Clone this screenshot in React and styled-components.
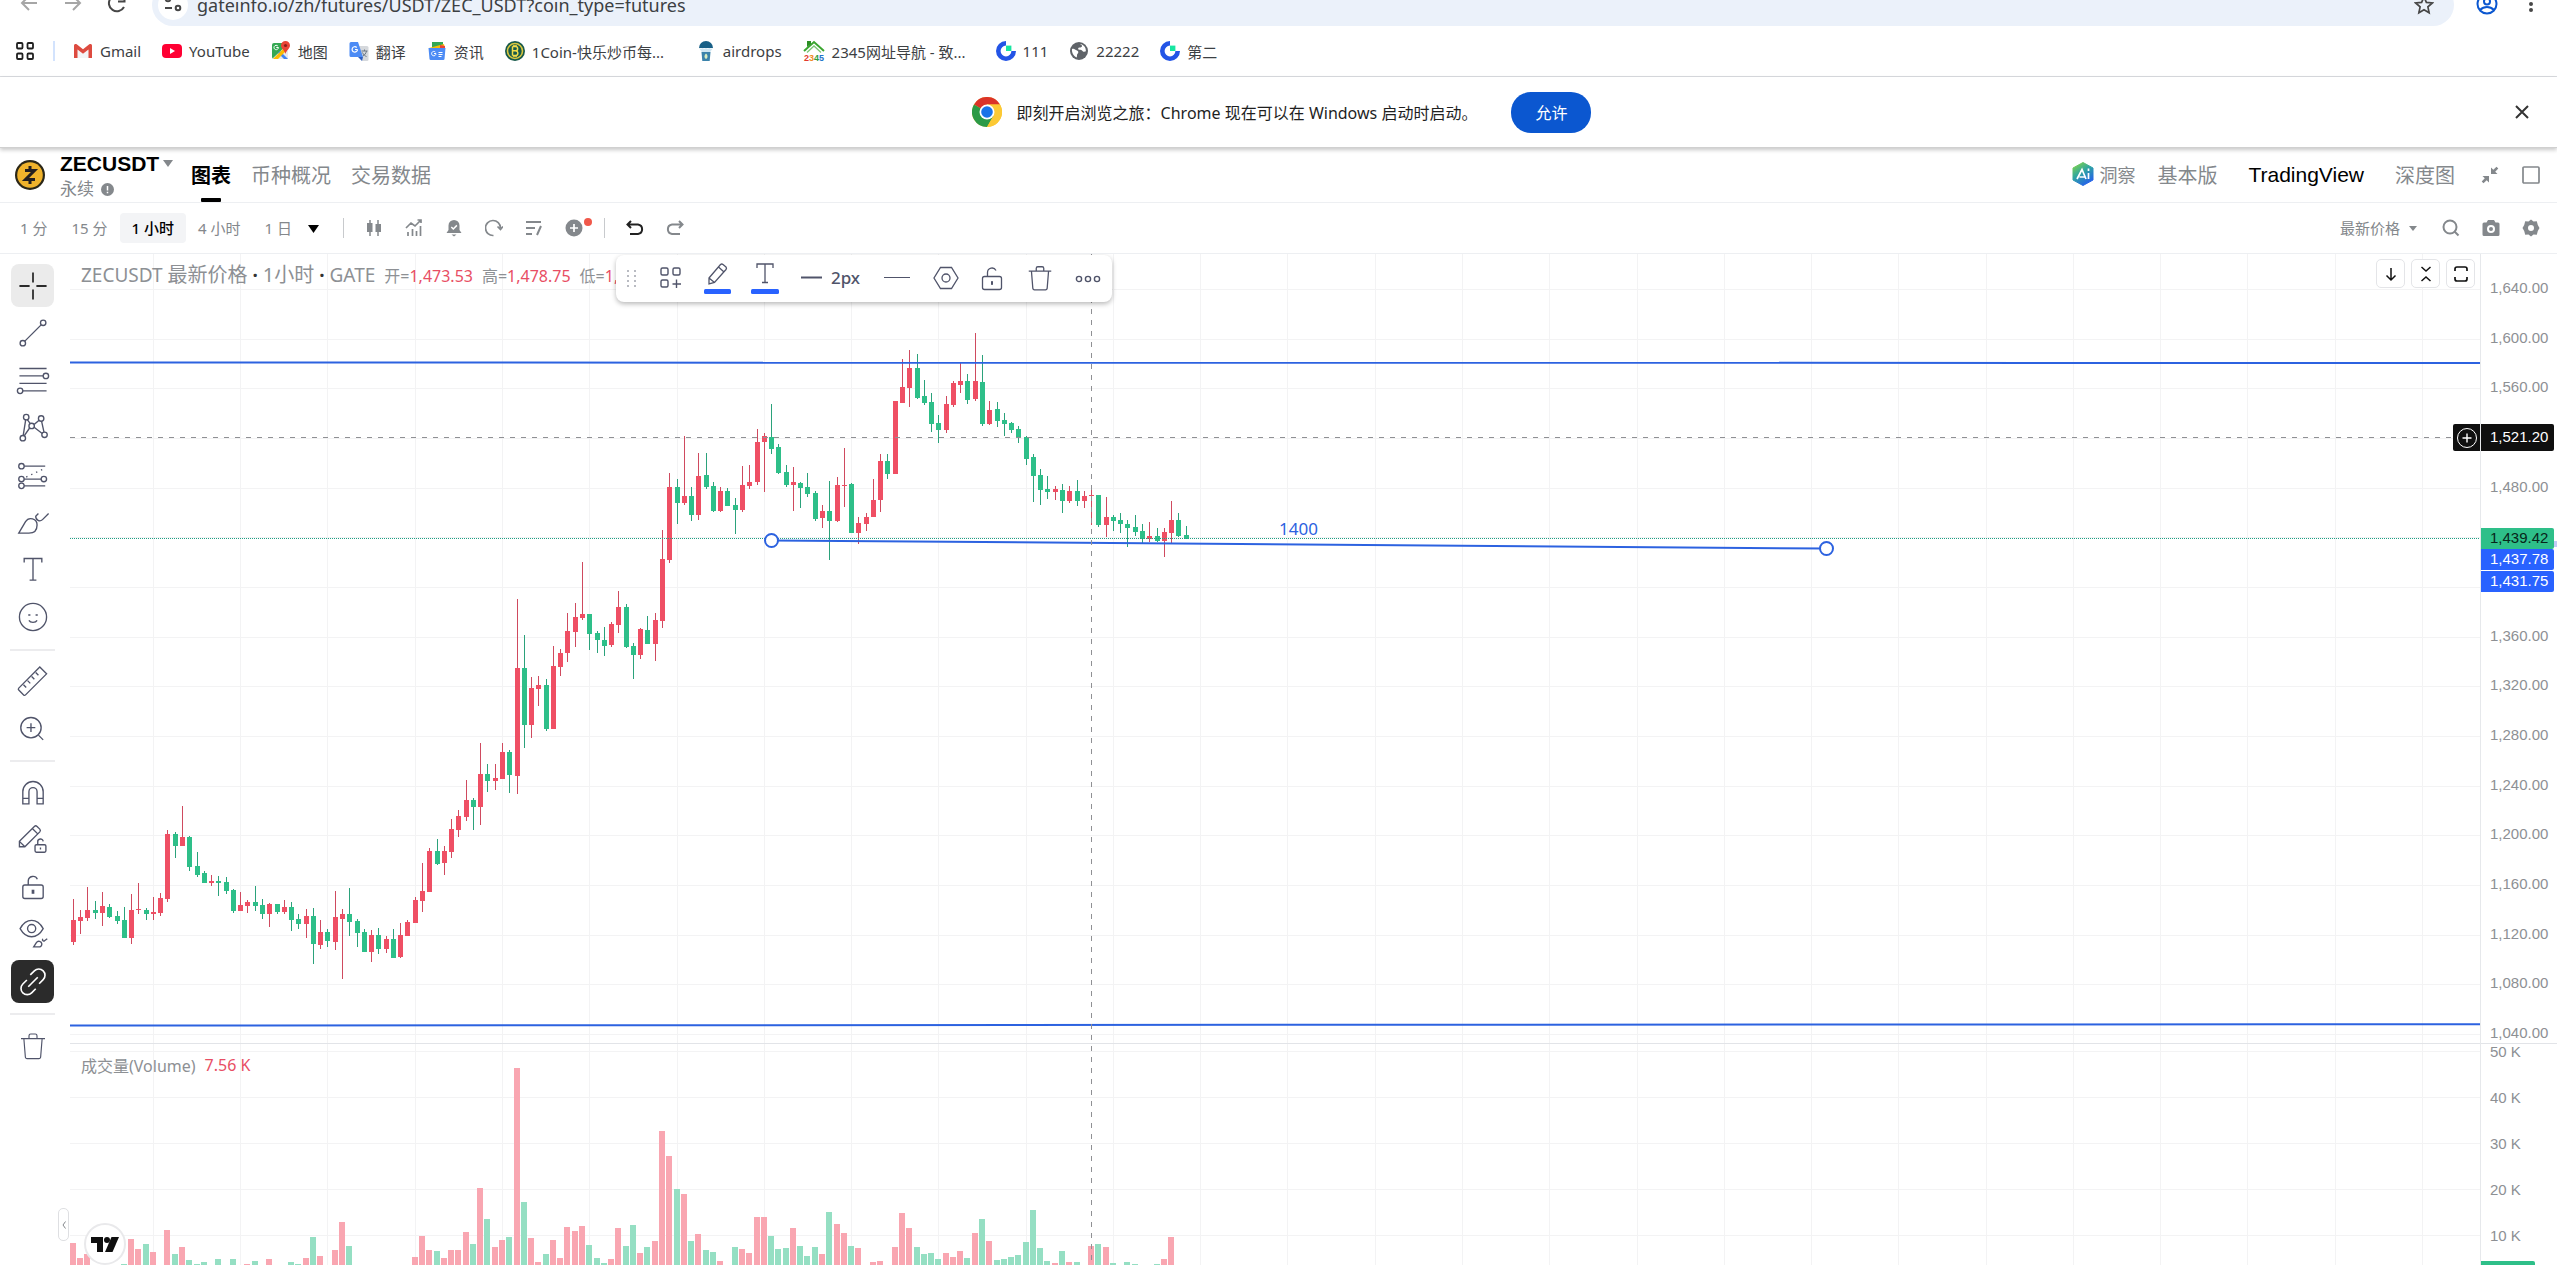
import React, { useState } from 'react';
import styled, { createGlobalStyle } from 'styled-components';

const GlobalStyle = createGlobalStyle`
  * {
    box-sizing: border-box;
  }
  body {
    margin: 0;
    overflow: hidden;
    background: #fff;
    font-family: 'Noto Sans', 'Noto Sans CJK SC', sans-serif;
    font-size: 15px;
    color: #1f1f1f;
  }
  button, input, select {
    font: inherit;
    color: inherit;
    margin: 0;
    padding: 0;
    border: none;
    background: none;
    outline: none;
  }
  button {
    cursor: pointer;
  }
  a {
    color: inherit;
    text-decoration: none;
  }
  svg {
    display: block;
    flex: none;
  }
`;

const Page = styled.div`
  display: flex;
  flex-direction: column;
  height: 100vh;
`;

/* browser bars */

const AddressRow = styled.div`
  display: flex;
  align-items: flex-end;
  height: 26px;
  overflow: hidden;
`;

const AddressInner = styled.div`
  display: flex;
  align-items: center;
  flex: 1;
  height: 42px;
  padding: 0 15px 0 18px;
  color: #474747;
`;

const NavButton = styled.button`
  display: flex;
  width: 22px;
  margin-right: 22px;
  color: ${(p) => (p.$dim ? '#a6a6a6' : '#474747')};
`;

const AddressPill = styled.div`
  display: flex;
  align-items: center;
  flex: 1;
  height: 42px;
  margin: 0 22px 0 2px;
  padding: 0 20px 0 6px;
  border-radius: 21px;
  background: #ebf1fa;
`;

const SiteInfo = styled.button`
  display: flex;
  align-items: center;
  justify-content: center;
  width: 30px;
  height: 30px;
  border-radius: 15px;
  background: #fff;
`;

const UrlInput = styled.input`
  flex: 1;
  margin-left: 9px;
  font-size: 18px;
  color: #3c4043;
`;

const MenuDots = styled.button`
  display: flex;
  margin-left: 24px;
`;

const Bookmarks = styled.nav`
  display: flex;
  align-items: center;
  gap: 21px;
  height: 51px;
  padding: 0 15px;
  border-bottom: 1px solid #dadce0;
`;

const BookmarkDivider = styled.span`
  width: 2px;
  height: 20px;
  margin: 0 -3px;
  background: #d3e3fd;
`;

const BookmarkLink = styled.a`
  display: flex;
  align-items: center;
  gap: 7px;
  color: #3c4043;
  white-space: nowrap;
  > span {
    width: ${(p) => (p.$long ? '143px' : 'auto')};
  }
`;

const InfoBar = styled.div`
  display: flex;
  align-items: center;
  justify-content: center;
  position: relative;
  z-index: 2;
  height: 71px;
  gap: 15px;
  padding-left: 6px;
  font-size: 16px;
  background: #fff;
  border-bottom: 1px solid #d0d0d0;
  box-shadow: 0 2px 4px rgba(0, 0, 0, 0.22);
`;

const AllowButton = styled.button`
  width: 80px;
  height: 41px;
  margin-left: 19px;
  border-radius: 20px;
  background: #0b57d0;
  color: #fff;
`;

const CloseButton = styled.button`
  position: absolute;
  right: 26px;
  top: 26px;
  color: #333;
`;

/* market header */

const MarketHeader = styled.header`
  display: flex;
  align-items: center;
  height: 55px;
  padding: 0 17px 0 15px;
  border-bottom: 1px solid #edeff2;
  font-size: 20px;
  color: #84888c;
`;

const PairBox = styled.div`
  width: 131px;
  margin-left: 15px;
  padding-top: 2px;
  line-height: 26px;
`;

const PairButton = styled.button`
  display: flex;
  align-items: center;
  gap: 4px;
  color: #000;
  font-family: 'Liberation Sans', sans-serif;
  font-size: 21px;
  font-weight: 700;
`;

const PairKind = styled.div`
  display: flex;
  align-items: center;
  gap: 7px;
  font-size: 17px;
  line-height: 24px;
`;

const Tabs = styled.nav`
  display: flex;
  align-self: stretch;
  gap: 20px;
`;

const Tab = styled.a`
  display: flex;
  align-items: center;
  position: relative;
  padding-bottom: 2px;
  color: ${(p) => (p.$active ? '#000' : '#84888c')};
  font-weight: ${(p) => (p.$active ? 700 : 400)};
  &::after {
    content: '';
    display: ${(p) => (p.$active ? 'block' : 'none')};
    position: absolute;
    left: 10px;
    right: 10px;
    bottom: 0;
    height: 4px;
    border-radius: 1px;
    background: #000;
  }
`;

const ViewModes = styled.div`
  display: flex;
  align-items: center;
  margin-left: auto;
  gap: 22px;
`;

const Insight = styled.a`
  display: flex;
  align-items: center;
  gap: 5px;
  padding-bottom: 2px;
  font-size: 18px;
`;

const ViewButton = styled.button`
  margin-left: ${(p) => (p.$apart ? '9px' : '0')};
  padding-bottom: ${(p) => (p.$active ? '0' : '2px')};
  font-family: 'Liberation Sans', 'Noto Sans CJK SC', sans-serif;
  font-size: ${(p) => (p.$active ? '21px' : '20px')};
  color: ${(p) => (p.$active ? '#000' : '#84888c')};
`;

const IconButton = styled.button`
  display: flex;
  align-items: center;
  justify-content: center;
  position: relative;
  width: ${(p) => p.$width || 18}px;
  color: ${(p) => p.$color || '#84888c'};
`;

/* interval toolbar */

const ChartBar = styled.div`
  display: flex;
  align-items: center;
  height: 51px;
  padding: 0 17px 0 8px;
  border-bottom: 1px solid #edeff2;
  color: #84888c;
`;

const Interval = styled.button`
  height: 30px;
  padding: 0 12px 2px;
  border-radius: 4px;
  white-space: nowrap;
  background: ${(p) => (p.$active ? '#f3f4f6' : 'transparent')};
  color: ${(p) => (p.$active ? '#000' : '#84888c')};
  font-weight: ${(p) => (p.$active ? 500 : 400)};
`;

const BarDivider = styled.span`
  width: 1px;
  height: 20px;
  margin: 0 21px;
  background: #c8cacd;
`;

const IconRow = styled.div`
  display: flex;
  align-items: center;
  gap: ${(p) => p.$gap || 22}px;
`;

const RightTools = styled(IconRow)`
  margin-left: auto;
`;

const PriceSource = styled.label`
  display: flex;
  align-items: center;
  gap: 9px;
  margin-right: 3px;
  > select {
    appearance: none;
    width: 60px;
  }
`;

const NewDot = styled.span`
  position: absolute;
  right: -9px;
  top: -1px;
  width: 8px;
  height: 8px;
  border-radius: 4px;
  background: #f0584a;
`;

/* work area */

const Workspace = styled.main`
  display: flex;
  flex: 1;
  min-height: 0;
  overflow: hidden;
`;

const ToolRail = styled.aside`
  display: flex;
  flex-direction: column;
  position: relative;
  width: 70px;
  padding: 10px 15px 0 10px;
`;

const ToolGroup = styled.div`
  display: flex;
  flex-direction: column;
  justify-content: space-between;
  height: ${(p) => p.$height}px;
  padding-bottom: 10px;
  margin-bottom: 9px;
  border-bottom: ${(p) => (p.$last ? 'none' : '2px solid #ececee')};
`;

const ToolButton = styled.button`
  display: flex;
  align-items: center;
  justify-content: center;
  width: 43px;
  height: 43px;
  margin-left: 1px;
  border-radius: 8px;
  background: ${(p) => (p.$dark ? '#2b2b2b' : p.$active ? '#ebebeb' : 'transparent')};
  color: ${(p) => (p.$dark ? '#fff' : p.$active ? '#2b2b2b' : '#50546a')};
`;

const CollapseHandle = styled.button`
  display: flex;
  align-items: center;
  justify-content: center;
  position: absolute;
  right: 1px;
  bottom: 24px;
  width: 11px;
  height: 33px;
  border: 1px solid #dedfe2;
  border-radius: 5px;
  color: #84888c;
`;

const ChartArea = styled.section`
  flex: 1;
  position: relative;
  min-width: 0;
  border-right: 1px solid #e6e8eb;
  > svg {
    width: 100%;
    height: 100%;
  }
`;

const PriceAxis = styled.aside`
  width: 76px;
  > svg {
    width: 100%;
    height: 100%;
  }
`;

const Legend = styled.div`
  display: flex;
  align-items: center;
  position: absolute;
  left: 11px;
  top: 7px;
  gap: 9px;
  height: 28px;
  font-size: 16px;
  white-space: nowrap;
  color: #8d9094;
  em {
    font-style: normal;
    color: #e84e64;
  }
`;

const LegendTitle = styled.span`
  font-size: 19px;
  line-height: 28px;
  b {
    color: #333;
  }
`;

const Cjk = styled.span`
  font-size: 20px;
`;

const VolumeLegend = styled(Legend)`
  top: 797px;
`;

const DrawBar = styled.div`
  display: flex;
  align-items: center;
  position: absolute;
  left: 546px;
  top: 1px;
  width: 496px;
  height: 47px;
  padding: 0 0 2px 10px;
  border-radius: 8px;
  background: #fff;
  color: #50546a;
  box-shadow: 0 2px 5px rgba(0, 0, 0, 0.28);
`;

const DrawButton = styled.button`
  display: flex;
  flex: none;
  align-items: center;
  justify-content: center;
  gap: 8px;
  width: ${(p) => p.$width || 48}px;
  height: 40px;
  font-size: 17px;
  font-weight: 500;
`;

const PaneButtons = styled.div`
  display: flex;
  gap: 6px;
  position: absolute;
  right: 5px;
  top: 5px;
`;

const PaneButton = styled.button`
  display: flex;
  align-items: center;
  justify-content: center;
  width: 29px;
  height: 29px;
  border: 1px solid #e4e5e8;
  border-radius: 5px;
  background: #fff;
  color: #111;
`;

const Watermark = styled.a`
  display: flex;
  align-items: center;
  justify-content: center;
  position: absolute;
  left: 14px;
  top: 969px;
  width: 42px;
  height: 42px;
  border: 2px solid #e9e9eb;
  border-radius: 21px;
  background: #fff;
`;

const Svg = ({ size = 18, box = 18, children, ...rest }) => (
  <svg
    width={size}
    height={size}
    viewBox={`0 0 ${box} ${box}`}
    fill="none"
    stroke="currentColor"
    aria-hidden="true"
    {...rest}
  >
    {children}
  </svg>
);

const GateIcon = () => (
  <Svg size={20} box={20} stroke="none">
    <path d="M10 0v4.600a5.400 5.400 0 1 0 5.400 5.400H20A10 10 0 1 1 10 0z" fill="#2354e6" />
    <path d="M10 4.600h5.400V10H10z" fill="#17e6a1" />
  </Svg>
);

const BOOKMARKS = [
  {
    label: 'Gmail',
    icon: (
      <Svg size={20} box={20} stroke="none">
        <path d="M4 8v9h12V8l-6 5z" fill="#f3f4f6" />
        <path d="M1 17V4.500C1 3 2.500 2.500 3.700 3.300L10 8.300l6.300-5C17.500 2.500 19 3 19 4.500V17h-3.500V8.500L10 12.800 4.500 8.500V17z" fill="#dd4b40" />
      </Svg>
    ),
  },
  {
    label: 'YouTube',
    icon: (
      <Svg size={20} box={20} stroke="none">
        <rect y="3" width="20" height="14" rx="4" fill="#ff0033" />
        <path d="M8 7v6l5-3z" fill="#fff" />
      </Svg>
    ),
  },
  {
    label: '地图',
    icon: (
      <Svg size={20} box={20} stroke="none">
        <rect x="1" y="2" width="16" height="16" rx="2" fill="#34a853" />
        <path d="M1 18L17 3v15z" fill="#e8eaed" />
        <path d="M9 10l8 8h-4L7 12z" fill="#4285f4" />
        <path d="M2 18l14-14 1 1v3L7 18z" fill="#fbbc04" />
        <path d="M14.500 0a4.500 4.500 0 0 0-4.500 4.500c0 3 3.500 4.500 4.500 8.500 1-4 4.500-5.500 4.500-8.500A4.500 4.500 0 0 0 14.500 0z" fill="#ea4335" />
        <circle cx="14.500" cy="4.500" r="1.600" fill="#8c1d18" />
        <path d="M7.500 6.500H5.300m2.100 0a2.200 2.200 0 1 1-.6-1.500" stroke="#fff" strokeWidth="1" />
      </Svg>
    ),
  },
  {
    label: '翻译',
    icon: (
      <Svg size={20} box={20} stroke="none">
        <path d="M8 5h10a1.500 1.500 0 0 1 1.500 1.500v12A1.500 1.500 0 0 1 18 20h-5z" fill="#d5d8dc" />
        <path d="M2 1h7l5 15H2a1.500 1.500 0 0 1-1.500-1.500v-12A1.500 1.500 0 0 1 2 1z" fill="#4c8bf5" />
        <path d="M9 16h5l-1 4z" fill="#2f5fc0" />
        <path d="M8.500 8.500H6m2.500 0a2.700 2.700 0 1 1-.8-2" stroke="#fff" strokeWidth="1.200" />
        <path d="M12.500 10h6m-3-1.500V10m2 0c-.5 2.500-2 4-3.500 5m-.5-3.500c.8 2 2.500 3.500 4 4" stroke="#6b7785" strokeWidth="1" />
      </Svg>
    ),
  },
  {
    label: '资讯',
    icon: (
      <Svg size={20} box={20} stroke="none">
        <rect x="5" y="1" width="11" height="8" fill="#34a853" />
        <path d="M2 7l15-4 1 5H3z" fill="#fbbc04" />
        <path d="M13 4l5 1v6h-5z" fill="#ea4335" />
        <path d="M1.500 7h17l-1 11a1.200 1.200 0 0 1-1.200 1H3.700a1.200 1.200 0 0 1-1.200-1z" fill="#4c8bf5" />
        <path d="M9 12.500H7m2 .2a2.200 2.200 0 1 1-.7-1.700M11.500 11.500h4m-4 2h4m-4 2h3" stroke="#fff" strokeWidth="1" />
      </Svg>
    ),
  },
  {
    label: '1Coin-快乐炒币每...',
    long: true,
    icon: (
      <Svg size={20} box={20} stroke="none">
        <circle cx="10" cy="10" r="10" fill="#17594a" />
        <circle cx="10" cy="10" r="7.500" fill="none" stroke="#d9c63f" strokeWidth="1.600" />
        <path d="M7.500 5.500v9m0-9h3a2 2 0 0 1 0 4.300h-3m3 0a2.300 2.300 0 0 1 0 4.700h-3M9 4v1.500M11 4v1.500M9 14.500V16m2-1.500V16" stroke="#f2dc4a" strokeWidth="1.500" />
      </Svg>
    ),
  },
  {
    label: 'airdrops',
    icon: (
      <Svg size={20} box={20} stroke="none">
        <path d="M3 7a7 7 0 0 1 14 0z" fill="#175f86" />
        <path d="M3 7c1.500 1 2.500 1 3.500 0 1 1 2.500 1 3.500 0 1 1 2.500 1 3.500 0 1 1 2.500 1 3.500 0l-3.500 5h-7z" fill="#cfe6f2" />
        <path d="M5.500 11h9l-.8 9H6.300z" fill="#3b83ab" />
        <path d="M10 12.500c2 1.500 2 4.500 0 5.500-2-1-2-4 0-5.500z" fill="#d8ecc0" />
      </Svg>
    ),
  },
  {
    label: '2345网址导航 - 致...',
    long: true,
    icon: (
      <Svg size={22} box={22} stroke="none">
        <path d="M1 11L11 2l10 9" stroke="#3aa52f" strokeWidth="2" fill="none" />
        <path d="M4 12.500l7-6.500 7 6.500" stroke="#7cc576" strokeWidth="1.300" fill="none" />
        <path d="M4 1h4v3L4 7z" fill="#2b8f24" />
        <text x="1" y="21" fontSize="9" fontWeight="700" fontFamily="Liberation Sans, sans-serif">
          <tspan fill="#e23a2e">2</tspan>
          <tspan fill="#f08a24">3</tspan>
          <tspan fill="#2f9e3c">4</tspan>
          <tspan fill="#2273c9">5</tspan>
        </text>
      </Svg>
    ),
  },
  { label: '111', icon: <GateIcon /> },
  {
    label: '22222',
    icon: (
      <Svg size={20} box={20} stroke="none">
        <circle cx="10" cy="10" r="9" fill="#5f6368" />
        <path d="M3 8c2-1 3 .5 5 1.500 2 .7 1.500 2.500.3 3.500-.5 1 0 2.500-.8 3.500C4.500 15 2.500 11.500 3 8zM11 3l2 1.500c.3 1.500-1 2-2.500 2S8.500 8.300 10 8.700c1.700 0 3 .3 3.700 1.500 1 .8 2.300.5 3.200 0C17 6 14.500 3.500 11 3z" fill="#fff" />
      </Svg>
    ),
  },
  { label: '第二', icon: <GateIcon /> },
];

const INTERVALS = ['1 分', '15 分', '1 小时', '4 小时', '1 日'];

const Ring = ({ x, y, r = 2 }) => <circle cx={x} cy={y} r={r} />;

const LockShape = () => (
  <>
    <rect x="4.500" y="12.500" width="19" height="13" rx="2" />
    <path d="M9.500 12.500V8.500a4.500 4.500 0 0 1 8.500-2M14 17v4" />
    <path d="M14 17.500v3" strokeWidth="2" />
  </>
);

const TrashShape = () => (
  <path d="M3.500 7.500h21M10.500 7V5a1.500 1.500 0 0 1 1.500-1.500h4A1.500 1.500 0 0 1 17.500 5v2M6 7.500l1.300 16a1.500 1.500 0 0 0 1.500 1.500h10.400a1.500 1.500 0 0 0 1.500-1.500L22 7.500" />
);

const TOOLS = {
  main: [
    ['十字光标', <path d="M14 4v7.500M14 16.500V24M4 14h7.500M16.500 14H24" strokeWidth="1.300" />],
    ['趋势线', <><Ring x={6.500} y={21.500} /><Ring x={21.500} y={6.500} /><path d="M8 20L20 8" /></>],
    ['斐波那契', <><path d="M4 5.500h20M4 11h17.500M4 16.500h20M6.500 22H24" /><Ring x={23.500} y={11} /><Ring x={4.500} y={22} /></>],
    ['形态', <><Ring x={9} y={6} /><Ring x={20} y={7} /><Ring x={13} y={12.500} /><Ring x={6.500} y={21.500} /><Ring x={22.500} y={19} /><path d="M8.600 8L6.800 19.500M9.800 7.800l2.200 3M11.500 14l-4 5.800M14.800 11.500L18.500 8.300M20.300 9l1.800 8M14.800 13.500l6 4.500" /></>],
    ['预测', <><Ring x={5.500} y={7.500} /><Ring x={5.500} y={17} /><Ring x={22} y={17} /><Ring x={5.500} y={22} /><path d="M7.500 7.500H23M7.500 17H20M7.500 22H23" /><path d="M9 15.500L23 9" strokeDasharray="1 3" /></>],
    ['画笔', <path d="M3.500 21.500l5-8.500a4.600 4.600 0 0 1 8.500 2.500c0 4-2.500 6-6 6zM25.500 7l-4.500 4.500c-2 2-5 .5-5-2.500l2-2" />],
    ['文本', <path d="M7.500 8.500V5.500h13v3M14 5.500v16M11.500 21.500h5" />],
    ['图标', <><circle cx="14" cy="14" r="10" /><path d="M11 16.500c1 2 5 2 6 0" /><path d="M11.300 12v1M16.700 12v1" strokeWidth="1.600" /></>],
  ],
  measure: [
    ['测量', <path d="M3.500 18.500L19 3l5 5L8.500 23.500a1 1 0 0 1-1.400 0l-3.600-3.600a1 1 0 0 1 0-1.400zM7 16l2 2M10 13l2 2M13 10l2 2M16 7l2 2" />],
    ['放大', <><circle cx="12.500" cy="13" r="7.500" /><path d="M12.500 9.800v6.400M9.300 13h6.400M18 18.500l3.500 3.500" /></>],
  ],
  state: [
    ['磁铁', <path d="M6.500 22v-9a7.500 7.500 0 0 1 15 0v9h-4.500v-9a3 3 0 0 0-6 0v9zM6.500 18H11M17 18h4.500" />],
    ['锁定绘图', <><path d="M4 19v-4L15 4a1.500 1.500 0 0 1 2 0l2 2a1.500 1.500 0 0 1 0 2L8 19zM13.500 5.500l4 4M4 15l4 4" /><rect x="15.500" y="17.500" width="8" height="5.500" rx="1" /><path d="M17.500 17.500v-2a2 2 0 0 1 4-.5M19.500 19.500v1.500" /></>],
    ['锁定', <><rect x="6.500" y="12.500" width="15" height="10" rx="1.500" /><path d="M10.500 12.500v-3a3.500 3.500 0 0 1 6.700-1.200" /><path d="M14 16v3" strokeWidth="2" /></>],
    ['隐藏', <><path d="M4.500 10c4.500-8 12.500-8 17 0-4.500 8-12.500 8-17 0z" /><circle cx="13" cy="10" r="3" /><path d="M14.500 23.500l2-3.200a2.200 2.200 0 0 1 4 1c0 1.500-1 2.200-2.500 2.200zM24.500 17.500l-2 1.500c-1 .5-2-.3-1.300-1.500" /></>],
  ],
};

// candles: high, body top, body bottom, low, r/g, top of the volume bar (0 = out of view)
// vertical units are a third of a pixel, measured from the base of each block
const BLOCKS = [
  {
    base: 1578,
    bars: `357 420 486 495 r 609|390 411 423 462 r 654|321 390 414 423 r 641|363 390 399 417 g 0|336 378 399 438 r 0
372 381 411 414 g 0|393 408 423 432 g 0|381 420 474 474 g 672|342 390 474 492 r 597|309 386 389 402 r 627
384 390 402 420 g 612|351 396 402 420 r 636|339 354 399 408 r 0|150 162 357 366 r 570|156 162 198 234 g 642
78 171 198 198 r 621|168 171 261 273 g 660|216 258 285 291 g 672|273 279 309 309 g 666|285 303 309 318 r 0
288 303 308 348 g 657|291 306 333 342 g 0|327 330 393 399 g 657|336 375 393 393 r 0|360 366 378 399 r 672
318 366 378 393 g 663|357 375 402 417 g 0|369 372 402 441 r 657|372 372 396 402 g 0|360 381 396 402 r 0
366 381 420 453 g 666|402 417 432 447 g 672|387 408 432 474 r 654|384 408 492 552 g 591|420 456 495 507 r 648
447 456 483 501 g 0|333 411 486 510 r 630|387 402 417 597 r 546|324 402 426 468 g 618|417 423 459 501 g 0
447 456 516 516 g 0|450 465 516 546 r 0|444 465 507 522 g 0|468 477 507 519 r 0|447 477 534 534 g 0
429 465 531 534 r 0|420 426 468 468 r 0|351 360 429 429 r 651|249 333 363 396 r 588|204 213 336 336 r 630
177 213 252 255 g 633|198 213 249 285 r 654|117 147 216 234 r 630|90 108 150 171 r 630`,
  },
  {
    base: 438,
    bars: `1140 1200 1251 1262 r 576|1194 1200 1221 1290 g 612|1029 1122 1221 1275 r 444|1092 1122 1143 1176 g 537|1092 1134 1143 1170 r 621
1029 1056 1137 1137 r 600|1050 1056 1125 1179 g 591|597 804 1128 1182 r 84|705 804 975 1044 g 486|831 864 975 1014 r 594
828 855 867 918 r 666|837 855 987 993 g 642|738 798 987 987 r 600|747 759 801 828 r 654|639 693 759 786 r 561
609 651 696 741 r 573|486 642 654 660 r 558|642 642 702 750 g 615|693 699 720 759 g 654|681 720 738 768 g 669
666 672 735 741 r 657|573 621 675 699 r 564|612 621 741 744 g 618|729 738 765 837 g 555|684 687 765 777 r 639
648 690 732 732 g 621|639 660 732 783 r 603|390 477 663 684 r 273|219 261 480 489 r 348|237 261 309 372 g 447
108 288 309 315 r 462|261 288 345 363 g 603|159 228 345 360 r 582|159 225 261 267 g 630|246 258 333 336 g 636
261 273 333 336 r 663|264 273 318 318 g 0|294 315 330 402 g 621|198 255 330 336 r 627|195 246 258 267 r 639
87 126 246 255 r 531|99 108 126 276 r 531|12 111 147 162 g 588|132 141 219 222 g 627|195 216 255 261 g 624`,
  },
  {
    base: 198,
    bars: `441 486 495 573 r 564|486 489 504 564 g 618|459 501 522 531 g 648|513 519 597 603 g 621|555 573 594 624 r 642
483 573 603 720 g 516|471 495 603 606 r 552|384 495 498 561 r 579|489 492 639 639 g 618|591 609 639 672 r 624
579 591 612 633 r 0|477 540 591 591 r 666|402 423 540 576 r 663|402 423 462 477 g 0|243 243 462 462 r 621
117 201 249 249 r 519|90 144 204 261 r 564|102 144 234 237 g 621|180 228 249 255 g 642|219 246 312 336 g 639
285 309 330 369 g 657|228 252 330 339 r 639|183 189 255 261 r 651|126 183 195 219 r 633|162 183 240 252 g 654
39 183 237 243 r 579|105 186 312 318 g 537|243 270 312 315 r 603|246 267 303 321 g 660|279 300 312 348 g 657
306 309 330 339 g 651|318 327 354 369 g 645|348 351 417 435 g 606|402 411 468 546 g 510|447 465 510 555 g 624
468 507 516 537 g 663|498 507 516 540 r 669|492 510 543 579 g 633|498 513 543 549 r 666|480 513 543 558 g 666
513 528 543 564 r 0|510 525 528 615 r 618|525 525 615 621 g 612|531 591 615 651 r 621|585 591 603 633 g 669
579 600 612 639 g 0|600 612 624 681 g 666|585 621 636 648 g 672|612 633 657 669 g 0|606 648 657 666 r 0
624 648 663 666 g 672|624 636 663 711 r 657|543 600 639 669 r 591|579 600 648 651 g 0|618 645 657 657 g 0`,
  },
];

const CANDLES = BLOCKS.flatMap(({ base, bars }) =>
  bars.split(/[|\n]/).map((bar) => {
    const [high, top, bottom, low, tone, vol] = bar.trim().split(' ');
    const y = (v) => Math.round((Number(v) + base) / 3);
    return { high: y(high), top: y(top), bottom: y(bottom), low: y(low), tone, vol: Number(vol) };
  })
);

const COLORS = { r: '#ef4f64', g: '#2ebf89' };
const WICK_COLORS = { r: '#cf4a5f', g: '#2ba27b' };
const VOLUME_COLORS = { r: '#f9a6b1', g: '#95dfc3' };

const BAR_STEP = 80 / 11;
const barX = (i) => Math.floor(3.4 + i * BAR_STEP);
const PRICES = Array.from({ length: 16 }, (_, i) => 1640 - i * 40);
const priceY = (p) => Math.round(35 + ((1640 - p) * 149) / 120);
const VOLUMES = [50, 40, 30, 20, 10];
const volumeY = (k) => 797 + ((50 - k) * 46) / 10;
const PANE_SPLIT = 789;
const LINE = '#2c62e0';

const Grid = () => (
  <g stroke="#f3f3f4">
    {PRICES.map((p) => (
      <line key={p} x1="0" x2="100%" y1={priceY(p) + 0.5} y2={priceY(p) + 0.5} />
    ))}
    {VOLUMES.map((k) => (
      <line key={k} x1="0" x2="100%" y1={volumeY(k) + 0.5} y2={volumeY(k) + 0.5} />
    ))}
    {Array.from({ length: 27 }, (_, i) => barX(11 + i * 12) + 0.5).map((x) => (
      <line key={x} x1={x} x2={x} y1="0" y2="100%" />
    ))}
    <line x1="0" x2="100%" y1={PANE_SPLIT + 0.5} y2={PANE_SPLIT + 0.5} stroke="#e2e4e8" />
  </g>
);

const Candles = () => (
  <g>
    {CANDLES.map((c, i) => (
      <g key={i} fill={COLORS[c.tone]}>
        {c.vol > 0 && (
          <rect
            x={barX(i) - 3}
            y={Math.round(786 + c.vol / 3)}
            width="6"
            height={Math.round(241 - c.vol / 3)}
            fill={VOLUME_COLORS[c.tone]}
          />
        )}
        <rect x={barX(i)} y={c.high} width="1" height={c.low - c.high} fill={WICK_COLORS[c.tone]} />
        <rect x={barX(i) - 2} y={c.top} width="5" height={Math.max(1, c.bottom - c.top)} />
      </g>
    ))}
  </g>
);

const PriceChart = () => (
  <svg role="img" aria-label="ZECUSDT 1小时">
    <Grid />
    <Candles />
    <line x1="0" x2="100%" y1="284.500" y2="284.500" stroke="#1f9f84" strokeDasharray="1 1" />
    <g stroke={LINE} strokeWidth="2">
      <line x1="0" x2="100%" y1="108.500" y2="109" />
      <line x1="0" x2="100%" y1="771.500" y2="770.200" />
      <line x1="701" x2="1756" y1="286.500" y2="294.500" />
      <circle cx="701.500" cy="286.500" r="6.500" fill="#fff" />
      <circle cx="1756.500" cy="294.500" r="6.500" fill="#fff" />
    </g>
    <text x="1209" y="281" fontSize="17" fill="#2c62e0">1400</text>
    <g stroke="#8f9094" strokeDasharray="5 6">
      <line x1="0" x2="100%" y1="183.500" y2="183.500" />
      <line x1="1021.500" x2="1021.500" y1="0" y2="100%" />
    </g>
  </svg>
);

const AxisTag = ({ y, height, fill, color = '#fff', children }) => (
  <>
    <path d={`M0 ${y}h71a2 2 0 0 1 2 2v${height - 4}a2 2 0 0 1-2 2H0z`} fill={fill} />
    <text x="9" y={y + (height - 1) / 2 + 5} fill={color}>{children}</text>
  </>
);

const Axis = () => (
  <svg fontFamily="Liberation Sans, sans-serif" fontSize="15" fill="#8d9094">
    {PRICES.filter((p) => p !== 1520 && p !== 1440 && p !== 1400).map((p) => (
      <text key={p} x="9" y={priceY(p) + 4}>{`${p.toLocaleString('en-US')}.00`}</text>
    ))}
    <rect y={PANE_SPLIT} width="100%" height="1" fill="#e2e4e8" />
    {VOLUMES.map((k) => (
      <text key={k} x="9" y={volumeY(k) + 6}>{`${k} K`}</text>
    ))}
    <rect x="73" y="287" width="4" height="6" fill="#c3cbf6" />
    <AxisTag y={170} height={27} fill="#0f0f0f">1,521.20</AxisTag>
    <AxisTag y={274} height={21} fill="#2ebf89" color="#08251a">1,439.42</AxisTag>
    <AxisTag y={295} height={21} fill="#2962ff">1,437.78</AxisTag>
    <AxisTag y={317} height={21} fill="#2962ff">1,431.75</AxisTag>
    <path d="M0 1007h52a2 2 0 0 1 2 2v10H0z" fill="#2ebf89" />
  </svg>
);

const AddPrice = styled.button`
  display: flex;
  align-items: center;
  justify-content: center;
  position: absolute;
  right: 0;
  top: 170px;
  width: 27px;
  height: 27px;
  border-radius: 2px 0 0 2px;
  background: #0f0f0f;
  color: #fff;
`;

const DrawingBar = () => (
  <DrawBar>
    <svg width="12" height="20" viewBox="0 0 12 20" fill="#b9bbc2" aria-hidden="true">
      {[2, 7, 12, 17].map((y) => (
        <React.Fragment key={y}>
          <rect x="1" y={y} width="2" height="2" />
          <rect x="8" y={y} width="2" height="2" />
        </React.Fragment>
      ))}
    </svg>
    <DrawButton $width={65} aria-label="模板">
      <Svg size={24} box={24} strokeWidth="1.400">
        <rect x="2" y="2" width="7" height="7" rx="1.500" />
        <rect x="14" y="2" width="7" height="7" rx="1.500" />
        <rect x="2" y="14" width="7" height="7" rx="1.500" />
        <path d="M17.500 13.500v8.500M13.500 18H22" />
      </Svg>
    </DrawButton>
    <DrawButton $width={29} aria-label="线条颜色">
      <Svg size={32} box={32} strokeWidth="1.300">
        <path d="M7 16L18.500 2.500a2 2 0 0 1 2.500 0L24 5a2 2 0 0 1 0 2.500L12.500 20.500 7 22zM16.500 5l5.500 5M7 16l5.500 4.500" />
        <rect x="2" y="27" width="27" height="5" rx="1.500" fill="#2962ff" stroke="none" />
      </Svg>
    </DrawButton>
    <DrawButton $width={66} aria-label="文字颜色">
      <Svg size={32} box={32} strokeWidth="1.300">
        <path d="M8 6V2h16v4M16 2v18M13 20.500h6" />
        <rect x="2" y="27" width="28" height="5" rx="1.500" fill="#2962ff" stroke="none" />
      </Svg>
    </DrawButton>
    <DrawButton $width={64}>
      <Svg size={23} box={23} strokeWidth="2">
        <path d="M1 11.500h21" />
      </Svg>
      2px
    </DrawButton>
    <DrawButton $width={70} aria-label="线型">
      <Svg size={26} box={26}>
        <path d="M0 12.500h26" strokeWidth="1" />
      </Svg>
    </DrawButton>
    <DrawButton $width={27} aria-label="设置">
      <Svg size={28} box={28} strokeWidth="1.300">
        <path d="M8.500 3.500h11L26 14l-6.500 10.500h-11L2 14z" />
        <circle cx="14" cy="14" r="4" />
      </Svg>
    </DrawButton>
    <DrawButton $width={66} aria-label="锁定">
      <Svg size={28} box={28} strokeWidth="1.300"><LockShape /></Svg>
    </DrawButton>
    <DrawButton $width={30} aria-label="删除">
      <Svg size={30} box={28} strokeWidth="1.200"><TrashShape /></Svg>
    </DrawButton>
    <DrawButton $width={66} aria-label="更多">
      <Svg size={26} box={26} strokeWidth="1.400">
        <circle cx="4" cy="14" r="2.600" />
        <circle cx="13" cy="14" r="2.600" />
        <circle cx="22" cy="14" r="2.600" />
      </Svg>
    </DrawButton>
  </DrawBar>
);

const renderTools = (list) =>
  list.map(([name, shape]) => (
    <ToolButton key={name} aria-label={name} $active={name === '十字光标'}>
      <Svg size={38} box={28}>{shape}</Svg>
    </ToolButton>
  ));

const App = () => {
  const [url, setUrl] = useState('gateinfo.io/zh/futures/USDT/ZEC_USDT?coin_type=futures');
  const [interval, setInterval] = useState('1 小时');

  return (
    <>
      <GlobalStyle />
      <Page>
        <AddressRow>
          <AddressInner>
            <NavButton $dim aria-label="后退">
              <Svg size={22} box={22} strokeWidth="2"><path d="M19 9H4m7-7L4 9l7 7" /></Svg>
            </NavButton>
            <NavButton $dim aria-label="前进">
              <Svg size={22} box={22} strokeWidth="2"><path d="M3 9h15m-7-7l7 7-7 7" /></Svg>
            </NavButton>
            <NavButton aria-label="刷新">
              <Svg size={22} box={22} strokeWidth="2"><path d="M18 13a8 8 0 1 1-1.500-9.500M18.500 1v6.500H12" /></Svg>
            </NavButton>
            <AddressPill>
              <SiteInfo aria-label="网站信息">
                <Svg size={20} box={20} strokeWidth="2">
                  <circle cx="5" cy="4" r="2.300" />
                  <path d="M11 4h7M2 13h7" />
                  <circle cx="15" cy="13" r="2.300" />
                </Svg>
              </SiteInfo>
              <UrlInput aria-label="网址" value={url} onChange={(e) => setUrl(e.target.value)} />
              <Svg size={20} box={20} strokeWidth="1.700">
                <path d="M10 2l2.400 5.400 5.900.6-4.400 3.900 1.200 5.800L10 14.700l-5.100 3 1.200-5.800L1.700 8l5.900-.6z" />
              </Svg>
            </AddressPill>
            <Svg size={22} box={22} strokeWidth="2" color="#0b57d0">
              <circle cx="11" cy="10" r="9.500" />
              <circle cx="11" cy="7.500" r="3" />
              <path d="M4 16c4-4 10-4 14 0" />
            </Svg>
            <MenuDots aria-label="菜单">
              <Svg size={20} box={20} stroke="none" fill="#474747">
                <circle cx="9" cy="3" r="2" />
                <circle cx="9" cy="9" r="2" />
                <circle cx="9" cy="15" r="2" />
              </Svg>
            </MenuDots>
          </AddressInner>
        </AddressRow>

        <Bookmarks>
          <Svg size={20} box={20} strokeWidth="1.800">
            <rect x="2" y="2" width="5.500" height="5.500" rx="1" />
            <rect x="12.500" y="2" width="5.500" height="5.500" rx="1" />
            <rect x="2" y="12.500" width="5.500" height="5.500" rx="1" />
            <rect x="12.500" y="12.500" width="5.500" height="5.500" rx="1" />
          </Svg>
          <BookmarkDivider />
          {BOOKMARKS.map((b) => (
            <BookmarkLink key={b.label} href="#" $long={b.long}>
              {b.icon}
              <span>{b.label}</span>
            </BookmarkLink>
          ))}
        </Bookmarks>

        <InfoBar>
          <Svg size={30} box={30} stroke="none">
            <circle cx="15" cy="15" r="15" fill="#fbc02d" />
            <path d="M15 15L2 7.500A15 15 0 0 1 28 7.500H15z" fill="#db3328" />
            <path d="M2 7.500A15 15 0 0 0 15 30l6.500-11.300L15 15z" fill="#2c9a47" />
            <path d="M28 7.500H15V15l6.500 3.700L15 30A15 15 0 0 0 28 7.500z" fill="#fcc934" />
            <circle cx="15" cy="15" r="7.500" fill="#fff" />
            <circle cx="15" cy="15" r="5.800" fill="#1a73e8" />
          </Svg>
          <span>即刻开启浏览之旅：Chrome 现在可以在 Windows 启动时启动。</span>
          <AllowButton>允许</AllowButton>
          <CloseButton aria-label="关闭">
            <Svg size={18} box={18} strokeWidth="2"><path d="M3 3l12 12M15 3L3 15" /></Svg>
          </CloseButton>
        </InfoBar>

        <MarketHeader>
          <Svg size={30} box={30} stroke="none">
            <circle cx="15" cy="15" r="15" fill="#2b2718" />
            <circle cx="15" cy="15" r="12.800" fill="#f0b32c" />
            <path d="M15 6v3.500M15 20.500V24M10 10.500h9.500L10.500 19.500H20" stroke="#231f20" strokeWidth="3" />
          </Svg>
          <PairBox>
            <PairButton>
              ZECUSDT
              <Svg size={10} box={10} stroke="none" fill="#84888c"><path d="M0 1h10L5 8z" /></Svg>
            </PairButton>
            <PairKind>
              永续
              <Svg size={13} box={13} stroke="none">
                <circle cx="6.500" cy="6.500" r="6.500" fill="#84888c" />
                <path d="M6.500 3v4.500M6.500 8.700v1.500" stroke="#fff" strokeWidth="1.500" />
              </Svg>
            </PairKind>
          </PairBox>
          <Tabs>
            <Tab href="#" $active>图表</Tab>
            <Tab href="#">币种概况</Tab>
            <Tab href="#">交易数据</Tab>
          </Tabs>
          <ViewModes>
            <Insight href="#">
              <svg width="22" height="24" viewBox="0 0 22 24">
                <defs>
                  <linearGradient id="ai" x1="0" y1="0" x2="0.6" y2="1">
                    <stop offset="0" stopColor="#8edb3a" />
                    <stop offset="0.5" stopColor="#2fa6a0" />
                    <stop offset="1" stopColor="#2563e8" />
                  </linearGradient>
                </defs>
                <path d="M11 0.500l10 5.500v12l-10 5.500L1 18V6z" fill="url(#ai)" stroke="url(#ai)" strokeLinejoin="round" />
                <path d="M5 17l5-9.500 4 9.500M7.500 15h5M16.500 11v6M16.500 6.500v2.500" fill="none" stroke="#fff" strokeWidth="1.700" />
              </svg>
              洞察
            </Insight>
            <ViewButton>基本版</ViewButton>
            <ViewButton $active $apart>TradingView</ViewButton>
            <ViewButton $apart>深度图</ViewButton>
            <IconRow $gap={19}>
              <IconButton $width={26} aria-label="收起">
                <Svg size={18} box={18} stroke="none" fill="#84888c">
                  <path d="M10 8V1.500l2.300 2.300L15.500.700 17.300 2.500 14.200 5.700 16.500 8zM8 10v6.500l-2.300-2.300L2.500 17.300.700 15.500l3.100-3.200L1.500 10z" />
                </Svg>
              </IconButton>
              <IconButton aria-label="全屏">
                <Svg strokeWidth="1.700"><rect x="1" y="1" width="16" height="16" rx="1" /></Svg>
              </IconButton>
            </IconRow>
          </ViewModes>
        </MarketHeader>

        <ChartBar>
          {INTERVALS.map((name) => (
            <Interval key={name} $active={name === interval} onClick={() => setInterval(name)}>
              {name}
            </Interval>
          ))}
          <IconButton aria-label="更多周期">
            <Svg size={11} box={11} stroke="none" fill="#000"><path d="M0 2h11L5.500 10z" /></Svg>
          </IconButton>
          <BarDivider />
          <IconRow>
            <IconButton aria-label="K线类型">
              <Svg strokeWidth="1.500">
                <path d="M5 1v16M13 1v16" />
                <rect x="2" y="4" width="5.500" height="9" fill="currentColor" stroke="none" />
                <rect x="10.500" y="5" width="5.500" height="8" fill="currentColor" stroke="none" />
              </Svg>
            </IconButton>
            <IconButton aria-label="指标">
              <Svg strokeWidth="1.700">
                <path d="M1 9l5-5 4 3 6-6M12.500 1H16v3M3 17v-4M7.500 17v-7M11.500 17v-5M15.500 17V7" />
              </Svg>
            </IconButton>
            <IconButton aria-label="预警">
              <Svg stroke="none">
                <path d="M9 1a5.500 5.500 0 0 1 5.500 5.500V11l2 3h-15l2-3V6.500A5.500 5.500 0 0 1 9 1zM6.500 15.500h5L9 17.500z" fill="currentColor" />
                <path d="M6.300 8l2 2 3.600-3.600" stroke="#fff" strokeWidth="1.500" />
              </Svg>
            </IconButton>
            <IconButton aria-label="回放">
              <Svg strokeWidth="1.700">
                <path d="M8.500 16.500a7.500 7.500 0 1 1 7-7.500M12.500 7.500l3 3 2.500-3" />
              </Svg>
            </IconButton>
            <IconButton aria-label="模板列表">
              <Svg strokeWidth="2"><path d="M1 3h15M1 9h9M1 15h6M16 7l-4 9" /></Svg>
            </IconButton>
            <IconButton aria-label="添加">
              <Svg stroke="none">
                <circle cx="9" cy="9" r="8.500" fill="currentColor" />
                <path d="M9 5v8M5 9h8" stroke="#fff" strokeWidth="1.700" />
              </Svg>
              <NewDot />
            </IconButton>
          </IconRow>
          <BarDivider />
          <IconRow>
            <IconButton $color="#222" aria-label="撤销">
              <Svg strokeWidth="2"><path d="M5 2L1.500 5.500 5 9M1.500 5.500H12a4.800 4.800 0 0 1 0 9.500H4" /></Svg>
            </IconButton>
            <IconButton aria-label="重做">
              <Svg strokeWidth="2"><path d="M13 2l3.500 3.500L13 9M16.500 5.500H6A4.800 4.800 0 0 0 6 15h8" /></Svg>
            </IconButton>
          </IconRow>
          <RightTools>
            <PriceSource>
              <select aria-label="价格类型">
                <option>最新价格</option>
              </select>
              <Svg size={8} box={8} stroke="none" fill="#84888c"><path d="M0 2h8L4 7z" /></Svg>
            </PriceSource>
            <IconButton aria-label="搜索">
              <Svg strokeWidth="2"><circle cx="8" cy="8" r="6.500" /><path d="M12.500 12.500l4 4" /></Svg>
            </IconButton>
            <IconButton aria-label="截图">
              <Svg stroke="none" fill="#84888c">
                <path fillRule="evenodd" d="M6 1h6l1.500 2.500H16A1.500 1.500 0 0 1 17.500 5v10.500A1.500 1.500 0 0 1 16 17H2A1.500 1.500 0 0 1 .5 15.500V5A1.500 1.500 0 0 1 2 3.500h2.500zM9 6a4 4 0 1 0 0 8 4 4 0 0 0 0-8zm0 2a2 2 0 1 1 0 4 2 2 0 0 1 0-4z" />
              </Svg>
            </IconButton>
            <IconButton aria-label="设置">
              <Svg stroke="none" fill="#84888c">
                <path fillRule="evenodd" d="M9 .5l2.500 2 3.300-.2L15.800 6l1.700 3-1.700 3-1 3.700-3.300-.2-2.500 2-2.500-2-3.300.2L2.200 12 .5 9l1.700-3 1-3.700 3.300.2zM9 6a3 3 0 1 0 0 6 3 3 0 0 0 0-6z" />
              </Svg>
            </IconButton>
          </RightTools>
        </ChartBar>

        <Workspace>
          <ToolRail>
            <ToolGroup $height={387}>{renderTools(TOOLS.main)}</ToolGroup>
            <ToolGroup $height={102}>{renderTools(TOOLS.measure)}</ToolGroup>
            <ToolGroup $height={244}>
              {renderTools(TOOLS.state)}
              <ToolButton $dark aria-label="同步">
                <Svg size={38} box={28} strokeWidth="1.200">
                  <path d="M10.500 17.500l7-7M12 8.800l3-3a4.500 4.500 0 0 1 6.500 6.500l-3 3M9.500 12.500l-3 3A4.500 4.500 0 0 0 13 22l3-3" />
                </Svg>
              </ToolButton>
            </ToolGroup>
            <ToolGroup $height={53} $last>
              <ToolButton aria-label="删除">
                <Svg size={32} box={28}><TrashShape /></Svg>
              </ToolButton>
            </ToolGroup>
            <CollapseHandle aria-label="收起工具栏">
              <Svg size={10} box={10}><path d="M6.500 1.500L4 5l2.500 3.500" /></Svg>
            </CollapseHandle>
          </ToolRail>

          <ChartArea>
            <PriceChart />
            <Legend>
              <LegendTitle>
                ZECUSDT <Cjk>最新价格</Cjk> <b>·</b> <Cjk>1小时</Cjk> <b>·</b> GATE
              </LegendTitle>
              <span>开=<em>1,473.53</em></span>
              <span>高=<em>1,478.75</em></span>
              <span>低=<em>1,470.16</em></span>
            </Legend>
            <VolumeLegend>
              <span>成交量(Volume)</span>
              <em>7.56 K</em>
            </VolumeLegend>
            <DrawingBar />
            <PaneButtons>
              <PaneButton aria-label="下移窗格">
                <Svg strokeWidth="1.500"><path d="M9 3v12M4.500 10.500L9 15l4.500-4.500" /></Svg>
              </PaneButton>
              <PaneButton aria-label="折叠窗格">
                <Svg strokeWidth="1.500"><path d="M4.500 2L9 6l4.500-4M4.500 16L9 12l4.500 4" /></Svg>
              </PaneButton>
              <PaneButton aria-label="最大化窗格">
                <Svg strokeWidth="1.700"><path d="M3 6V4a2 2 0 0 1 2-2h8a2 2 0 0 1 2 2v2M3 12v2a2 2 0 0 0 2 2h8a2 2 0 0 0 2-2v-2" /></Svg>
              </PaneButton>
            </PaneButtons>
            <AddPrice aria-label="添加价格">
              <Svg size={22} box={22}><circle cx="11" cy="11" r="9.500" /><path d="M11 6.500v9M6.500 11h9" strokeWidth="1.400" /></Svg>
            </AddPrice>
            <Watermark href="#" aria-label="TradingView">
              <svg width="28" height="15" viewBox="0 0 28 15" fill="#0f0f0f">
                <path d="M0 0h12v15H6V6H0z" />
                <circle cx="16" cy="3" r="3" />
                <path d="M20.500 0H28l-6.500 15H14z" />
              </svg>
            </Watermark>
          </ChartArea>

          <PriceAxis>
            <Axis />
          </PriceAxis>
        </Workspace>
      </Page>
    </>
  );
};

export default App;
